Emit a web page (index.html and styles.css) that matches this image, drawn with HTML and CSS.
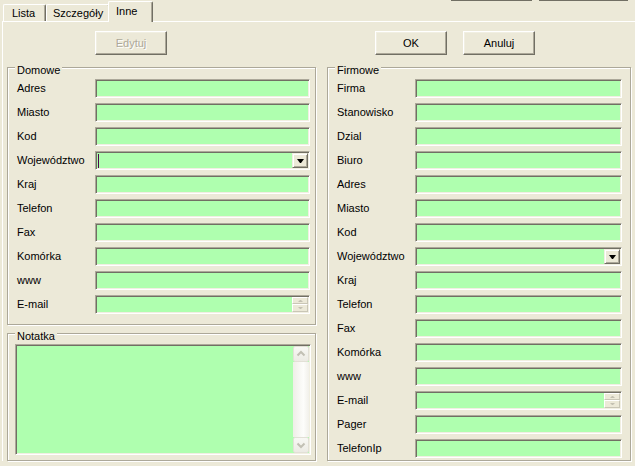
FILE: index.html
```html
<!DOCTYPE html>
<html lang="pl">
<head>
<meta charset="utf-8">
<title>Inne</title>
<link rel="stylesheet" href="styles.css">
</head>
<body>
<div class="window">
  <div class="tabstrip">
    <div class="tab tab-lista">Lista</div>
    <div class="tab tab-szczegoly">Szczegóły</div>
    <div class="tab tab-inne">Inne</div>
    <div class="stubs"><span class="stub stub-a"></span><span class="stub stub-b"></span></div>
  </div>
  <div class="panel">
    <div class="toolbar">
      <button class="btn" disabled>Edytuj</button>
      <button class="btn btn-ok">OK</button>
      <button class="btn btn-cancel">Anuluj</button>
    </div>
    <div class="columns">
      <div class="col-left">
        <div class="group group-home">
          <div class="legend">Domowe</div>
          <div class="rows">
            <div class="row"><span class="label">Adres</span><span class="field"></span></div>
            <div class="row"><span class="label">Miasto</span><span class="field"></span></div>
            <div class="row"><span class="label">Kod</span><span class="field"></span></div>
            <div class="row"><span class="label">Województwo</span><span class="field"><span class="value"><span class="caret"></span></span><span class="combo-btn"></span></span></div>
            <div class="row"><span class="label">Kraj</span><span class="field"></span></div>
            <div class="row"><span class="label">Telefon</span><span class="field"></span></div>
            <div class="row"><span class="label">Fax</span><span class="field"></span></div>
            <div class="row"><span class="label">Komórka</span><span class="field"></span></div>
            <div class="row"><span class="label">www</span><span class="field"></span></div>
            <div class="row"><span class="label">E-mail</span><span class="field"><span class="value"></span><span class="spin"><span class="spin-btn spin-up"></span><span class="spin-btn spin-down"></span></span></span></div>
          </div>
        </div>
        <div class="group group-memo">
          <div class="legend">Notatka</div>
          <div class="memo">
            <div class="memo-text"></div>
            <div class="scrollbar">
              <span class="sb-btn"><svg width="14" height="14" viewBox="0 0 14 14"><polyline points="3.5,8.5 7,5 10.5,8.5" fill="none" stroke="#C2C0B4" stroke-width="2"/></svg></span>
              <span class="sb-track"></span>
              <span class="sb-btn"><svg width="14" height="14" viewBox="0 0 14 14"><polyline points="3.5,5.5 7,9 10.5,5.5" fill="none" stroke="#C2C0B4" stroke-width="2"/></svg></span>
            </div>
          </div>
        </div>
      </div>
      <div class="group group-work">
        <div class="legend">Firmowe</div>
        <div class="rows">
          <div class="row"><span class="label">Firma</span><span class="field"></span></div>
          <div class="row"><span class="label">Stanowisko</span><span class="field"></span></div>
          <div class="row"><span class="label">Dzial</span><span class="field"></span></div>
          <div class="row"><span class="label">Biuro</span><span class="field"></span></div>
          <div class="row"><span class="label">Adres</span><span class="field"></span></div>
          <div class="row"><span class="label">Miasto</span><span class="field"></span></div>
          <div class="row"><span class="label">Kod</span><span class="field"></span></div>
          <div class="row"><span class="label">Województwo</span><span class="field"><span class="value"></span><span class="combo-btn"></span></span></div>
          <div class="row"><span class="label">Kraj</span><span class="field"></span></div>
          <div class="row"><span class="label">Telefon</span><span class="field"></span></div>
          <div class="row"><span class="label">Fax</span><span class="field"></span></div>
          <div class="row"><span class="label">Komórka</span><span class="field"></span></div>
          <div class="row"><span class="label">www</span><span class="field"></span></div>
          <div class="row"><span class="label">E-mail</span><span class="field"><span class="value"></span><span class="spin"><span class="spin-btn spin-up"></span><span class="spin-btn spin-down"></span></span></span></div>
          <div class="row"><span class="label">Pager</span><span class="field"></span></div>
          <div class="row"><span class="label">TelefonIp</span><span class="field"></span></div>
        </div>
      </div>
    </div>
  </div>
</div>
</body>
</html>
```

FILE: styles.css
```css
* { box-sizing: border-box; }
html, body { margin: 0; }
body {
  background: #ECE9D8;
  font: 11px/13px "Liberation Sans", Arial, sans-serif;
  color: #000;
  overflow: hidden;
}
.window { width: 635px; height: 466px; overflow: hidden; }

/* tabs */
.tabstrip { display: flex; align-items: flex-end; height: 21px; padding-left: 3px; }
.tab {
  height: 17px;
  padding-top: 2px;
  border: 1px solid #fff;
  border-right-color: #716F64;
  border-bottom: 0;
  border-radius: 2px 2px 0 0;
  box-shadow: inset -1px 0 #ACA899;
  white-space: nowrap;
  background: #ECE9D8;
}
.tab-lista { width: 43px; padding-left: 8px; }
.tab-szczegoly { width: 64px; padding-left: 6px; }
.tab-inne {
  width: 45px;
  padding-left: 7px;
  padding-top: 3px;
  margin-left: -2px;
  height: 21px;
  margin-bottom: -1px;
  position: relative;
  z-index: 1;
}
.stubs { display: flex; gap: 7px; margin-left: auto; margin-right: 7px; align-self: flex-start; }
.stub { height: 1px; background: #716F64; }
.stub-a { width: 81px; }
.stub-b { width: 89px; }

/* panel */
.panel { margin-left: 2px; border-top: 1px solid #fff; border-left: 1px solid #fff; }
.toolbar { display: flex; padding: 9px 0 0 92px; }
.btn {
  width: 72px;
  height: 24px;
  padding: 0;
  font: inherit;
  color: #000;
  background: #ECE9D8;
  border: 1px solid;
  border-color: #fff #716F64 #716F64 #fff;
  box-shadow: inset -1px -1px #ACA899, inset 1px 1px #F1EFE2;
  border-radius: 0;
}
.btn:disabled { color: #ACA899; text-shadow: 1px 1px #fff; }
.btn-ok { margin-left: 208px; }
.btn-cancel { margin-left: 16px; }

.columns {
  display: grid;
  grid-template-columns: 309px 304px;
  column-gap: 11px;
  margin-top: 12px;
  padding-left: 4px;
}
.col-left { display: flex; flex-direction: column; gap: 8px; }

.group {
  border: 1px solid #ACA899;
  box-shadow: inset 1px 1px #fff, 1px 1px #fff;
}
.group-home { padding: 0 5px 10px 9px; }
.group-work { padding: 0 8px 2px 9px; }
.group-memo { flex: 1; display: flex; flex-direction: column; padding: 0 4px 5px 9px; }
.legend {
  width: fit-content;
  margin: -4px 0 0 -2px;
  padding: 0 2px;
  line-height: 13px;
  background: #ECE9D8;
  white-space: nowrap;
}
.rows { display: flex; flex-direction: column; gap: 5px; margin-top: 2px; }
.row { display: flex; align-items: center; height: 19px; }
.label { width: 78px; flex: none; white-space: nowrap; }

.field, .memo {
  background: #AFFFAF;
  border: 1px solid;
  border-color: #ACA899 #fff #fff #ACA899;
  box-shadow: inset 1px 1px #716F64, inset -1px -1px #F1EFE2;
  padding: 1px;
}
.field { flex: 1; height: 19px; display: flex; }
.value { flex: 1; display: flex; align-items: center; }
.caret { width: 1px; height: 14px; margin-left: 1px; background: #4F004F; }

.combo-btn {
  width: 16px;
  display: flex;
  align-items: center;
  justify-content: center;
  background: #ECE9D8;
  border: 1px solid;
  border-color: #F1EFE2 #716F64 #716F64 #F1EFE2;
  box-shadow: inset 1px 1px #fff, inset -1px -1px #ACA899;
}
.combo-btn::after {
  content: "";
  width: 1px;
  margin-top: 1px;
  border-top: 4px solid #000;
  border-left: 3px solid transparent;
  border-right: 3px solid transparent;
}
.spin { width: 16px; display: flex; flex-direction: column; }
.spin-btn {
  display: flex;
  align-items: center;
  justify-content: center;
  background: #ECE9D8;
  border: 1px solid;
  border-color: #fff #C9C6B6 #C9C6B6 #fff;
}
.spin-up { height: 7px; }
.spin-down { height: 8px; }
.spin-up::after {
  content: "";
  width: 1px;
  border-bottom: 2px solid #C4C1B2;
  border-left: 2px solid transparent;
  border-right: 2px solid transparent;
}
.spin-down::after {
  content: "";
  width: 1px;
  border-top: 2px solid #C4C1B2;
  border-left: 2px solid transparent;
  border-right: 2px solid transparent;
}

.memo { flex: 1; margin: 1px 0 0 -2px; display: flex; }
.memo-text { flex: 1; }
.scrollbar { width: 16px; display: flex; flex-direction: column; }
.sb-btn {
  height: 16px;
  display: flex;
  align-items: center;
  justify-content: center;
  border: 1px solid #E2E0D6;
  border-radius: 2px;
  background: linear-gradient(to bottom, #F8F8F4, #ECEBE4);
}
.sb-track {
  flex: 1;
  background: linear-gradient(to right, #EFEEE7, #FDFDFB 65%, #F1F0EA);
}
```
